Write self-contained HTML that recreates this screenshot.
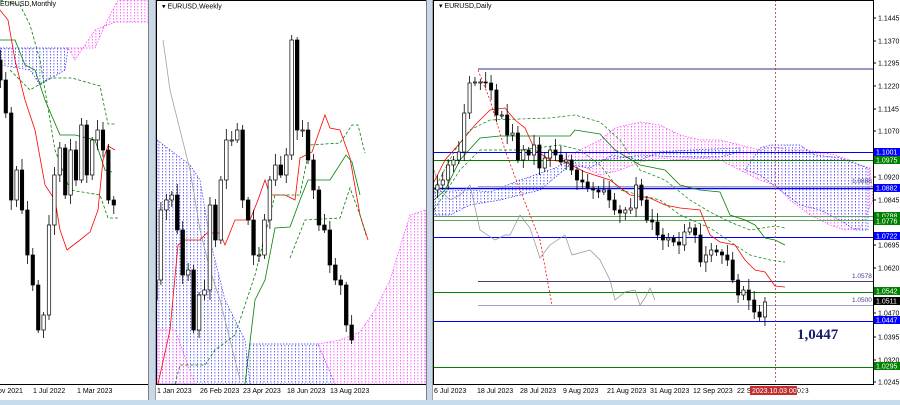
<!DOCTYPE html>
<html><head><meta charset="utf-8"><style>
html,body{margin:0;padding:0;width:900px;height:405px;overflow:hidden;background:#fff;font-family:"Liberation Sans",sans-serif}
svg text{font-family:"Liberation Sans",sans-serif;font-size:7px;fill:#000}
</style></head><body>
<svg id="s" width="900" height="405" viewBox="0 0 900 405" xmlns="http://www.w3.org/2000/svg">
<defs>
<pattern id="pb" width="3.5" height="3" patternUnits="userSpaceOnUse"><rect x="1" y="0" width="0.8" height="1.5" fill="#4040ff"/></pattern>
<pattern id="pm" width="3.5" height="3" patternUnits="userSpaceOnUse"><rect x="1" y="0" width="0.8" height="1.5" fill="#ff40ff"/></pattern>
</defs>
<rect width="900" height="405" fill="#fff"/>
<g id="g"></g>
<rect x="148" y="0" width="8" height="405" fill="#c8d8e8"/><line x1="148.5" y1="0" x2="148.5" y2="405" stroke="#808080"/><line x1="155.5" y1="0" x2="155.5" y2="405" stroke="#a0a0a0"/>
<rect x="426" y="0" width="7" height="405" fill="#c8d8e8"/><line x1="426.5" y1="0" x2="426.5" y2="405" stroke="#808080"/><line x1="432.5" y1="0" x2="432.5" y2="405" stroke="#a0a0a0"/>
<rect x="0" y="400" width="900" height="5" fill="#c8dcf0"/>
<line x1="0" y1="384.5" x2="148" y2="384.5" stroke="#000"/>
<line x1="156" y1="384.5" x2="426" y2="384.5" stroke="#000"/>
<line x1="433" y1="384.5" x2="873" y2="384.5" stroke="#000"/>
<line x1="873.5" y1="0" x2="873.5" y2="385" stroke="#000"/>
<line x1="156" y1="0.5" x2="426" y2="0.5" stroke="#000"/>
<line x1="433" y1="0.5" x2="873" y2="0.5" stroke="#000"/>
<line x1="156.5" y1="0" x2="156.5" y2="385" stroke="#000"/>
<line x1="433.5" y1="0" x2="433.5" y2="385" stroke="#000"/>
<text x="0" y="6" font-size="7">EURUSD,Monthly</text>
<text x="162" y="8.5">▾ EURUSD,Weekly</text>
<text x="439" y="8">▾ EURUSD,Daily</text>
<text x="-2" y="393">ov 2021</text><text x="33" y="393">1 Jul 2022</text><text x="77" y="393">1 Mar 2023</text>
<text x="157" y="393">1 Jan 2023</text><text x="200" y="393">26 Feb 2023</text><text x="243" y="393">23 Apr 2023</text><text x="287" y="393">18 Jun 2023</text><text x="330" y="393">13 Aug 2023</text>
<text x="434" y="393">6 Jul 2023</text><text x="477" y="393">18 Jul 2023</text><text x="520" y="393">28 Jul 2023</text><text x="563" y="393">9 Aug 2023</text><text x="607" y="393">21 Aug 2023</text><text x="650" y="393">31 Aug 2023</text><text x="693" y="393">12 Sep 2023</text><text x="737" y="393">22 S</text><text x="797" y="393">023</text>
<rect x="750" y="386" width="47" height="9" fill="#c03030"/><text x="752" y="393" style="fill:#fff">2023.10.03 00:00</text>
<text x="797" y="339" style="font-family:'Liberation Serif',serif;font-size:15px;font-weight:bold;fill:#1a1a6e">1,0447</text>
<g id="ax"></g>
</svg>
<script>
var g=document.getElementById('g'),ax=document.getElementById('ax'),NS='http://www.w3.org/2000/svg';
function el(t,a,p){var e=document.createElementNS(NS,t);for(var k in a)e.setAttribute(k,a[k]);(p||g).appendChild(e);return e;}
function pl(pts,c,d,w){el('polyline',{points:pts,fill:'none',stroke:c,'stroke-width':w||0.8,'stroke-dasharray':d||''});}
function cloud(pts,f){el('polygon',{points:pts,fill:'url(#'+f+')',stroke:f=='pb'?'#3030ff':'#ff30ff','stroke-width':0.7,'stroke-dasharray':'1.5,1.5'});}
function candles(x0,dx,cl,w){for(var i=1;i<cl.length;i++){var o=cl[i-1],c=cl[i],x=x0+dx*i;var hi=Math.min(o,c)-3-(i*7%9),lo=Math.max(o,c)+3+(i*5%8);
el('line',{x1:x,y1:hi,x2:x,y2:lo,stroke:'#000','stroke-width':0.8});var t=Math.min(o,c),h=Math.max(1,Math.abs(o-c));
el('rect',{x:x-w/2,y:t,width:w,height:h,fill:c>o?'#000':'#fff',stroke:'#000','stroke-width':0.7});}}
cloud('0,48 68,48 65,70 40,85 30,70 0,65','pb');
cloud('68,48 95,48 105,25 118,0 148,0 148,22 115,22 95,30 75,60','pm');
pl('0,40 15,40 25,65 35,70 45,100 60,135 75,135 95,140 105,170 112,172','green','',0.8);
pl('0,10 8,20 15,60 25,100 35,130 45,185 55,200 60,230 67,250 80,240 90,232 98,210 103,160 108,146 115,150','red','',0.8);
pl('0,0 20,5 30,25 40,60 55,150 70,190 100,195 108,218 118,218','green','3,2',0.8);
pl('10,70 30,90 50,78 72,78 100,86 108,124 115,124','green','3,2',0.8);
candles(-5,5.4,[60,80,113,200,170,210,255,285,330,315,225,175,148,195,150,180,125,175,140,130,150,200,205],3.4);
cloud('157,140 190,165 200,180 210,240 225,300 245,340 250,384 157,384','pb');
cloud('157,330 175,330 195,384 157,384','pm');
cloud('250,344 318,344 335,384 250,384','pb');
cloud('318,344 340,340 360,332 375,310 390,280 410,215 426,210 426,384 335,384','pm');
pl('163,40 170,90 180,130 190,170 200,230 210,270 220,300 230,340 240,380','#a0a0a0','',0.8);
pl('158,384 170,330 178,245 185,240 200,240 207,233 220,233 225,245 235,220 250,220 258,200 265,180 270,195 285,195 295,200 300,158 312,152 325,115 330,128 340,130 350,158 360,215 368,240','red','',0.8);
pl('245,384 255,300 265,280 275,228 290,227 300,200 308,180 330,180 346,155 352,162 360,195','green','',0.8);
pl('175,384 180,365 205,365 215,350 235,335 245,305 255,275 265,235 275,195 300,195 310,145 340,143 352,125 358,125 365,153','green','3,2',0.8);
pl('290,258 305,220 340,218 350,188 360,215 366,235','green','3,2',0.8);
candles(150,5.45,[300,280,210,200,195,230,275,270,330,295,290,205,240,180,140,140,130,200,220,255,255,220,180,165,175,155,40,130,130,160,190,225,230,265,280,285,325,340],3.6);
function hl(y,x1,c,w){el('line',{x1:x1,y1:y,x2:873,y2:y,stroke:c,'stroke-width':w||1});}
cloud('600,140 615,128 640,122 660,125 680,135 700,140 720,140 740,145 760,150 775,147 790,150 805,150 820,152 835,155 850,160 860,165 870,168 873,200 860,228 845,230 830,225 810,215 790,200 775,185 760,180 740,170 720,160 700,158 680,160 660,158 640,162 620,170 600,175 580,165 560,160 580,150','pm');
cloud('760,148 770,145 800,145 815,155 840,158 860,165 868,168 868,230 855,230 840,220 820,210 800,205 780,190 760,175 745,170','pb');
cloud('434,192 470,190 490,192 500,188 520,180 555,168 570,160 600,160 620,158 640,155 680,157 720,157 740,152 740,148 690,150 660,152 640,160 612,155 590,168 570,165 540,190 500,200 470,205 450,215 434,215','pb');
hl(69,478,'#303080');hl(152.5,433,'#0000ff');hl(160.5,433,'#008000');hl(186.5,478,'#a0a0c0');hl(188.5,433,'#0000ff',1.5);
hl(216.5,433,'#60a060');hl(220.5,433,'#60a060');hl(237.5,433,'#0000ff');hl(281.5,478,'#404080');hl(292.5,433,'#008000');hl(305.5,478,'#a0a0c0');hl(321.5,433,'#0000ff');hl(367.5,433,'#008000');
pl('478,70 490,100 505,150 520,190 540,240 552,305','red','2,2',0.8);
pl('434,170 440,190 450,200 460,195 470,185 480,230 495,240 505,235 510,235 520,215 530,228 540,258 550,245 565,235 572,255 590,250 600,260 610,280 615,300 625,292 635,290 640,305 645,298 650,288 655,300','#909090','',0.7);
pl('434,182 445,160 460,143 475,125 490,110 505,108 515,120 525,128 535,150 550,160 565,162 585,172 610,180 630,195 650,198 665,205 680,208 700,210 710,235 720,242 735,245 745,260 755,270 765,272 775,286 785,287','red','',0.8);
pl('434,200 445,190 460,160 480,138 500,136 570,136 575,130 600,134 615,150 640,165 665,170 680,185 700,190 720,192 730,215 745,220 755,225 765,238 775,240 785,245','green','',0.8);
pl('434,190 455,150 470,130 490,120 550,118 575,115 600,122 620,140 640,170 665,180 690,200 710,212 730,222 750,230 775,226 785,228','green','3,2',0.7);
pl('434,210 460,170 480,150 520,150 560,145 580,150 600,165 620,190 640,195 660,200 680,215 710,228 735,245 750,255 770,260 785,262','green','3,2',0.7);
el('line',{x1:775.5,y1:0,x2:775.5,y2:384,stroke:'#c03030','stroke-width':0.8,'stroke-dasharray':'2,2'});
candles(432,5.37,[190,185,180,165,160,152,113,83,82,82,83,90,115,115,135,133,160,150,155,145,168,158,150,155,162,160,170,180,182,188,190,192,190,200,210,213,210,208,185,200,220,222,235,240,238,242,245,232,228,235,262,255,250,252,255,260,280,295,290,300,312,317,302],3.2);
var L=[[1.1445,18],[1.137,41],[1.1295,63],[1.122,86],[1.1145,109],[1.107,131],[1.092,177],[1.0845,200],[1.0695,245],[1.062,268],[1.047,313],[1.0395,337],[1.032,360],[1.0245,382]];
L.forEach(function(a){el('line',{x1:873,y1:a[1],x2:876,y2:a[1],stroke:'#000'},ax);var t=el('text',{x:878,y:a[1]+2.5},ax);t.textContent=a[0].toFixed(4);});
var B=[['1.1001',152,'#0000ff'],['1.0975',160,'#008000'],['1.0882',188,'#0000ff'],['1.0788',216,'#008000'],['1.0776',221,'#008000'],['1.0722',236,'#0000ff'],['1.0542',291,'#008000'],['1.0511',301,'#000'],['1.0447',320,'#0000ff'],['1.0295',366,'#008000']];
B.forEach(function(a){el('rect',{x:874,y:a[1]-4,width:26,height:8,fill:a[2]},ax);var t=el('text',{x:876,y:a[1]+2.5,style:'fill:#fff'},ax);t.textContent=a[0];});
[['1.0888',183],['1.0578',278],['1.0500',302]].forEach(function(a){var t=el('text',{x:852,y:a[1],style:'fill:#404080;font-size:6.5px'},ax);t.textContent=a[0];});
</script>
</body></html>
